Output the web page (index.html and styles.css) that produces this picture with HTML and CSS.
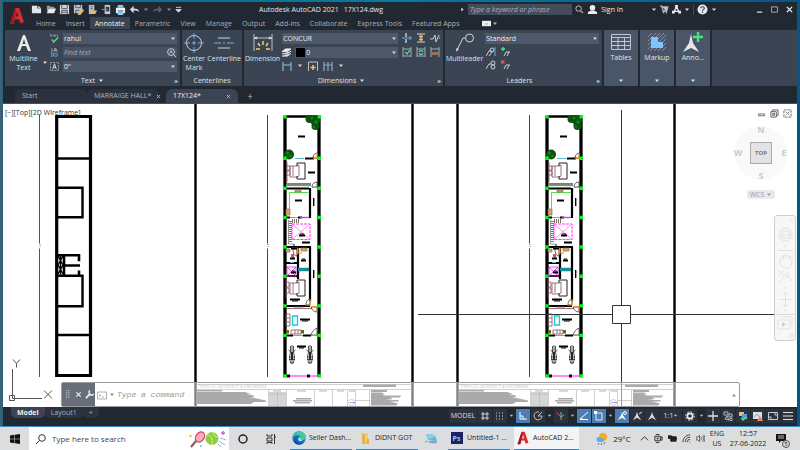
FILE: index.html
```html
<!DOCTYPE html>
<html lang="en">
<head>
<meta charset="utf-8">
<title>Autodesk AutoCAD 2021</title>
<link rel="stylesheet" href="styles.css">
</head>
<body>
<svg class="defs" aria-hidden="true">
  <defs>
    <symbol id="caret" viewBox="0 0 6 4"><path d="M1 .5h4L3 3z" fill="currentColor"/></symbol>
    <symbol id="logo" viewBox="0 0 16 18"><path d="M1 17 6.200 1h4L15 15l-3.600 1.400-1.300-4.200H6L4.500 17zM6.800 9.500h2.500L8 4.800z" fill="#d92b33"/><path d="M1 17 6.200 1l1 3L4.500 17z" fill="#a31822"/></symbol>
    <symbol id="arm" viewBox="0 0 12 12"><path d="M6 1 4.800 5 1 11l5-3 5 3-3.800-6z" fill="currentColor"/></symbol>

    <g id="plan">
      <path d="M285 116V377M319 116V377" stroke="#000" stroke-width="3.300" fill="none"/>
      <path d="M284 116.500h36" stroke="#000" stroke-width="2.600"/>
      <path d="M305 158.500h9M284 188.500h25M285 217.500h5M298 217.500h4M284 247h27M285 263h12M284 276h14M285 306h25M285 335.500h8M303 335.500h8" stroke="#000" stroke-width="2.200"/>
      <path d="M310 188V218M310 247V301M298 247V279" stroke="#000" stroke-width="2.200"/>
      <path d="M295 158.500h9M290 217.500h8M293 335.500h10M290 262.500h4" stroke="#54b9c8" stroke-width="1"/>
      <g fill="#08550f"><circle cx="289" cy="154.500" r="5"/><circle cx="309.500" cy="119" r="4"/><circle cx="315" cy="120.500" r="5"/><circle cx="315.500" cy="126" r="4"/></g>
      <g fill="#23801f"><circle cx="287.500" cy="153" r="1.500"/><circle cx="290.500" cy="156" r="1.300"/><circle cx="312" cy="118" r="1.300"/><circle cx="316" cy="122" r="1.600"/><circle cx="314" cy="127" r="1"/></g>
      <g fill="none" stroke="#834f5e" stroke-width=".8">
        <path d="M287 162v20M287 166h3v4h-3M287 171h3v4h-3M290 166h7l2-1v11l-2 1h-7zM293 166v10"/>
        <path d="M286 278v20M286 282h3v5h-3M286 288h3v5h-3M290 283h7l2-1v11l-2 1h-7zM293 283v10"/>
        <path d="M286 314h4v12h-4zM286 318h4M286 322h4M291 330h10v4H291zM295 330v4M298 330v4M286 308.500h26M294 307h9"/>
      </g>
      <path d="M297 166v-3h8v16h-8v-3M297 283v-3h8v16h-8v-3" fill="none" stroke="#222" stroke-width="1"/>
      <path d="M286 184.500h25" stroke="#937861" stroke-width="3"/><path d="M286 185.500h25" stroke="#36bec7" stroke-width="1.600" stroke-dasharray="2 1"/>
      <path d="M298 269.500h11" stroke="#168d94" stroke-width="3.500"/>
      <path d="M289.500 214v-21.500h19" stroke="#45e843" fill="none"/>
      <path d="M300 217.500h9" stroke="#e233e8" stroke-width="1.400"/>
      <path d="M292 224h18v15.500h-18z" fill="none" stroke="#ff38ef" stroke-dasharray="3 1"/><path d="M292 224l18 15.500M310 224l-18 15.500" stroke="#ff6bf2" stroke-width=".8"/>
      <path d="M290.500 221v21" stroke="#86705f" stroke-width="3" stroke-dasharray="1 1"/><path d="M292 221h8" stroke="#86705f" stroke-width="4" stroke-dasharray="1 1"/><path d="M288.500 220v24h5" stroke="#555" stroke-width=".6" fill="none"/>
      <path d="M286 209h4v6h-4zM295 190h6v2h-6zM286 249h4v3h-4zM301 248h6v3h-6z" fill="#d6a36d" stroke="#966f47" stroke-width=".7"/>
      <path d="M287 267h9v9h-9zl9 9m0-9-9 9" fill="none" stroke="#d82cdf" stroke-width=".8"/>
      <path d="M292.500 316h5v9h-5z" fill="none" stroke="#18c9ce" stroke-width="1.300"/>
      <path d="M286 330h3v3.500h-3zM301 330h3v3.500h-3z" fill="#5c6d16"/>
      <path d="M313 158c0-3 2-5 5-5v5zM312 187c0-3 2-5 5-5v5zM306 305c0-4 2-6 4-6v6zM311 307c1 3 3 5 6 5v-5zM311 335c1-3 3-6 6-7v7zM293 249c0 4 1 7 4 7v-7" fill="none" stroke="#222" stroke-width=".7"/>
      <path d="M313 158.500h5M317 153v5M312 187.500h5M305 305h5v-6M311 306.500h6v5M311 335.500h6M292 248h5v7M298 248v5h4" fill="none" stroke="#e88b37" stroke-width="1.100"/>
      <path d="M298 136.500h7M308 172.500h7M295 200.500h7M299 235.500h6M302 242.500h8M290 258.500h5M291 272.500h5M301 260.500h5M290 299.500h10M300 319.500h10M297 346.500h9M291 248.500h6" stroke="#000" stroke-width="2"/>
      <path d="M300 234h4M292 257h2M292 271h3M302 259h3M292 301h6M302 321h6M299 348h5M294 247v-3" stroke="#000" stroke-width="1"/>
      <path d="M291 254h3v3h-3z" fill="#cd5377"/><path d="M313.700 198v8M313.700 270v8" stroke="#000" stroke-width="1.400"/>
      <g id="bike" stroke="#272727" fill="none" stroke-width=".8"><path d="M292 345v19M290.500 346v6l-1 5 1 6h3l1-6-1-5v-6M288.500 350l3.500 3 3.500-3M289 357h6M289 359.500h6"/><path d="M292 352v8" stroke-width="2"/></g>
      <use href="#bike" x="18"/>
      <path d="M287 376h30" stroke="#ff3bec" stroke-width="1.200"/><path d="M287 374.500h3v3h-3zM307 374.500h3v3h-3z" fill="#170012"/>
      <path d="M283.200 115h3.500v3.400h-3.500zm34.400 0h3.500v3.400h-3.500zm-34.400 41.500h3.500v3.400h-3.500zm34.400 0h3.500v3.400h-3.500zM283.200 186.500h3.500v3.400h-3.500zm34.400 0h3.500v3.400h-3.500zM283.200 215.800h3.500v3.400h-3.500zm34.400 0h3.500v3.400h-3.500zM283.200 245.300h3.500v3.400h-3.500zm34.400 0h3.500v3.400h-3.500zM283.200 274.600h3.500v3.400h-3.500zm34.400 0h3.500v3.400h-3.500zM283.200 304.200h3.500v3.400h-3.500zm34.400 0h3.500v3.400h-3.500zM283.200 333.700h3.500v3.400h-3.500zm34.400 0h3.500v3.400h-3.500zM283.200 374.300h3.500v3.400h-3.500zm34.400 0h3.500v3.400h-3.500z" fill="#00fb16"/>
      <path d="M267.500 115V377" stroke="#444"/><path d="M267.500 243.500v5" stroke="#fff" stroke-width="2"/><path d="M268 244v4" stroke="#777" stroke-dasharray="1 1"/>
    </g>

    <g id="sheet">
      <path d="M195.500 104V407M412.500 104V407" stroke="#000" stroke-width="2.400"/>
      <path d="M197 384.500h215M197 389.500h215M268.500 389.500V407M286.500 389.500V407M314.500 389.500V407M332.500 389.500V407M347.500 389.500V407M355.500 389.500V407M369.500 389.500V407M355 400.500h15" stroke="#777" stroke-width=".7" fill="none"/>
      <path d="M269 392h17v15h-17z" fill="#aaa"/><path d="M277.500 392V407M269 394h17" stroke="#666" stroke-width=".6"/>
      <path d="M197 390h25v1.500h-25zM197 392h48l6 2-4 1h6l1 2h-4l16 3.500v1.500h-12l-3 2h-54zM363 384.500h33v2.500h-33zM371 390h16v2h-16zM371 392.500h11l3 2h-3l2 1h17l-1 2h-10l3 1.500-7 1h12l1 1.500h-9l8 2-2 2h-25zM296 398h15v1.500h-15zM293 400h19v1.500h-19zM295 402h15v1.500h-15z" fill="#555"/>
      <path d="M273 391h8M297 391h9M319 391h8M337 391h7M349 391h6" stroke="#666"/>
      <circle cx="351.500" cy="402.500" r="3" stroke="#777" stroke-width=".7" fill="none"/><path d="M350 402.500h5" stroke="#2735d2"/>
      <text x="199" y="388" class="sheet-title">TYPICAL ARCHITECT &amp; ENGINEERS</text>
    </g>
  </defs>
</svg>

<div class="desktop">
<main class="window">
  <header class="head">
    <button class="app" aria-label="Application menu"><svg viewBox="0 0 16 18" width="16" height="18"><use href="#logo"/></svg></button>
    <div class="titlebar">
      <div class="quick">
        <button aria-label="New"><svg class="i11" viewBox="0 0 12 12"><path d="M1 2h6v3h4v5H1zM8 2l3 2.500H8z" fill="#e2e4e7"/></svg></button>
        <button aria-label="Open"><svg class="i11" viewBox="0 0 12 12"><path d="M2 9V2h3l1 1h4v2H4z" fill="#9299a5"/><path d="M4 5h8l-2 5H2z" fill="#e9eaeb"/></svg></button>
        <button aria-label="Save"><svg class="i11" viewBox="0 0 12 12"><path d="M1 1h10v10H1z" fill="#d4d6da"/><path d="M3 1v4h6V1M3 11V7h6v4M3 9h6" stroke="#4b5461" fill="none"/></svg></button>
        <button aria-label="Save as"><svg class="i11" viewBox="0 0 12 12"><path d="M1 1h9v9H1z" fill="#c1c5cc"/><path d="M3 1v3h5V1M3 10V7h4" stroke="#4b5461" fill="none"/><path d="m6 10 4-5 2 2-4 5H5z" fill="#e6b26e"/></svg></button>
        <button aria-label="Open from web"><svg class="i11" viewBox="0 0 12 12"><path d="M2 1h6v10H2z" fill="#b8bdc5"/><path d="M4 3h2M4 5h2" stroke="#4a5564"/><path d="M5 7h6l-2 4H5z" fill="#e8b869"/></svg></button>
        <button aria-label="Save to mobile"><svg class="i11" viewBox="0 0 12 12"><path d="M4 1h6v10H4z" fill="#c3cad3"/><path d="M5 3h4v5H5z" fill="#34424e"/><path d="M1 6h5M4 4l2 2-2 2" stroke="#54b8ee" fill="none"/></svg></button>
        <button aria-label="Plot"><svg class="i11" viewBox="0 0 12 12"><path d="M1 4h10v6H1z" fill="#f0f2f4"/><path d="M3 1h6v3H3zM3 8h6v4H3z" fill="#8ec9f4"/><path d="M3 7.500h6" stroke="#526272"/></svg></button>
        <button aria-label="Undo"><svg class="i11" viewBox="0 0 12 12"><path d="M5 2v3c4 0 6 1 6 4-1-2-3-2-6-2v3L1 6z" fill="#d9dce0"/></svg></button>
        <svg class="c"><use href="#caret"/></svg>
        <button aria-label="Redo"><svg class="i11" viewBox="0 0 12 12"><path d="M7 2v3C3 5 1 6 1 9c1-2 3-2 6-2v3l4-4z" fill="#59616e"/></svg></button>
        <svg class="c"><use href="#caret"/></svg>
        <button aria-label="Customize"><svg class="i7" viewBox="0 0 8 8"><path d="M1 1.500h6M1 4h6L4 7z" stroke="#d7dadd" fill="#d7dadd"/></svg></button>
      </div>
      <h1 class="title"><span>Autodesk AutoCAD 2021</span><span>17X124.dwg</span></h1>
      <div class="account">
        <svg class="i5" viewBox="0 0 5 6"><path d="m1 1 3 2-3 2z" fill="#ddd"/></svg>
        <input class="keyword" aria-label="Search help" placeholder="Type a keyword or phrase">
        <button aria-label="Search"><svg class="i9" viewBox="0 0 10 10"><circle cx="4" cy="4" r="3" fill="none" stroke="#ccd0d5"/><path d="m6 6 3 3" stroke="#c79c57" stroke-width="1.500"/></svg></button>
        <button class="sign"><svg class="i11" viewBox="0 0 12 12"><circle cx="6" cy="4" r="3" fill="#eee"/><path d="M1 11V9l3-2h4l3 2v2z" fill="#eee"/></svg>Sign In</button>
        <svg class="c"><use href="#caret"/></svg>
        <button aria-label="App store"><svg class="i9" viewBox="0 0 10 10"><path d="M0 1h2l1 6h5M2 2h7L8 6H3" fill="#bdc2c9" stroke="#bdc2c9"/><circle cx="4" cy="8.500" r=".8" fill="#ddd"/><circle cx="7" cy="8.500" r=".8" fill="#ddd"/></svg></button>
        <button aria-label="Autodesk"><svg class="i9" viewBox="0 0 10 10"><path d="m5 2-3 6m3-6 3 6M2 7h6" stroke="#eee" fill="none" stroke-width="1.500"/><path d="M3.500 0h3v3h-3zM0 6.500h3v3H0zM7 6.500h3v3H7z" fill="#eee"/></svg></button>
        <svg class="c"><use href="#caret"/></svg>
        <i class="bar"></i>
        <button aria-label="Help"><svg class="i11" viewBox="0 0 12 12"><circle cx="6" cy="6" r="5.500" fill="#e7e8e9"/><path d="M4 4.500c0-2 4-2 4 0 0 1.500-2 1.200-2 3M6 8.500v1.300" fill="none" stroke="#38414f" stroke-width="1.200"/></svg></button>
        <svg class="c"><use href="#caret"/></svg>
      </div>
      <div class="winctl">
        <button aria-label="Minimize"><svg class="i7" viewBox="0 0 8 8"><path d="M1 7h6" stroke="#eee" stroke-width="1.300"/></svg></button>
        <button aria-label="Restore"><svg class="i7" viewBox="0 0 8 8"><path d="M.5 1h7v6h-7z" stroke="#bbb" fill="none"/></svg></button>
        <button aria-label="Close"><svg class="i7" viewBox="0 0 8 8"><path d="m1 1 6 6m0-6L1 7" stroke="#eee" stroke-width="1.600"/></svg></button>
      </div>
    </div>
    <nav class="menu">
      <button>Home</button><button>Insert</button><button class="on">Annotate</button><button>Parametric</button><button>View</button><button>Manage</button><button>Output</button><button>Add-ins</button><button>Collaborate</button><button>Express Tools</button><button>Featured Apps</button>
      <button class="mini" aria-label="Minimize ribbon"><svg class="i9" viewBox="0 0 10 6"><path d="M0 0h10v6H0z" fill="#eee"/><path d="M4 3.500h2" stroke="#777"/></svg><svg class="c"><use href="#caret"/></svg></button>
    </nav>
  </header>

  <section class="ribbon">
    <div class="panel p-text">
      <div class="tools">
        <button class="big"><svg class="i20" viewBox="0 0 20 20"><path d="M3 18 9 2h2l6 16h-3l-2-5H8l-2 5zM8.500 11h3L10 6z" fill="#e9eaec"/></svg><span>Multiline<br>Text</span></button>
        <svg class="c low"><use href="#caret"/></svg>
        <div class="rows">
          <div class="row"><button aria-label="Check spelling"><svg class="i9" viewBox="0 0 10 10"><path d="M0 3V1h2v2M4 3V1h2v2M9 1H8v2h1M0 2h2M4 2h2" stroke="#aaa" stroke-width=".7" fill="none"/><path d="m2 6 2 3 5-5" stroke="#50dc82" stroke-width="1.600" fill="none"/></svg></button><span class="field"><select aria-label="Text style"><option>rahul</option></select><svg class="c"><use href="#caret"/></svg></span></div>
          <div class="row"><button aria-label="Align text"><svg class="i9" viewBox="0 0 10 10"><path d="M2 0v10" stroke="#6db4e5"/><path d="m4 4 2-4 2 4M5 3h2" stroke="#bbb" fill="none"/><path d="M4 6h4v3H4z" fill="none" stroke="#5eaae0"/></svg></button><span class="field find"><input aria-label="Find text" placeholder="Find text"><svg class="i9" viewBox="0 0 10 10"><circle cx="4.500" cy="4.500" r="3.800" fill="none" stroke="#d5d8dd"/><path d="m7 7 3 3M3 6l1.500-3L6 6" stroke="#d5d8dd" fill="none"/></svg></span></div>
          <div class="row"><button aria-label="Text height"><svg class="i9" viewBox="0 0 10 10"><path d="M.5.5h9v9h-9z" stroke="#a6acb6" stroke-dasharray="2 1" fill="none"/><path d="m3 8 2-6 2 6M4 6h2" stroke="#e4e5e7" fill="none"/></svg></button><span class="field"><select aria-label="Height"><option>0"</option></select><svg class="c"><use href="#caret"/></svg></span></div>
        </div>
      </div>
      <div class="cap"><span>Text</span><svg class="c"><use href="#caret"/></svg><b>»</b></div>
    </div>
    <div class="panel p-center">
      <div class="tools">
        <button class="big"><svg class="i20" viewBox="0 0 20 20"><circle cx="10" cy="10" r="7.500" stroke="#ccd0d6" fill="none"/><path d="M10 0v6m0 2v4m0 2v6M0 10h6m2 0h4m2 0h6" stroke="#63b6ed"/></svg><span>Center<br>Mark</span></button>
        <button class="big"><svg class="i20" viewBox="0 0 20 20"><path d="M4 5h12M4 15h12" stroke="#cfd2d7" stroke-width="1.200"/><path d="M0 10h7m2 0h2m2 0h7" stroke="#63b6ed" stroke-width="1.200"/></svg><span>Centerline</span></button>
      </div>
      <div class="cap"><span>Centerlines</span></div>
    </div>
    <div class="panel p-dim">
      <div class="tools">
        <button class="big"><svg class="i20" viewBox="0 0 20 20"><path d="M1 1v17M19 1v17M1 5h18M1 5l3-1v2zM19 5l-3-1v2z" stroke="#ccd0d6" fill="#ccd0d6" stroke-width=".9"/><path d="M10 8v4M5 10l2 3M15 10l-2 3M3 16h4M17 16h-4" stroke="#ffca68" stroke-width="1.500"/></svg><span>Dimension</span></button>
        <div class="rows">
          <span class="field"><select aria-label="Dimension style"><option>CONCUR</option></select><svg class="c"><use href="#caret"/></svg></span>
          <div class="row"><svg class="i9" viewBox="0 0 10 10"><path d="m0 4 4-3h6L6 4zM0 6.500h6l4-3M0 9h6l4-3" fill="#eee" stroke="#eee"/></svg><span class="field layer"><i class="swatch"></i><select aria-label="Dimension layer"><option>0</option></select><svg class="c"><use href="#caret"/></svg></span></div>
          <div class="row dimtools">
            <button aria-label="Linear"><svg class="i10" viewBox="0 0 10 10"><path d="M1 1v9M9 1v9" stroke="#bbc0c8"/><path d="M1 4h8" stroke="#5baee6" stroke-width="1.300"/></svg></button><svg class="c"><use href="#caret"/></svg>
            <button aria-label="Quick"><svg class="i10" viewBox="0 0 10 10"><path d="M.5 10V1h9v9" stroke="#bbc0c8" fill="none"/><path d="M5 4v5M2.500 6.500h5" stroke="#ffbd4a" stroke-width="1.500"/></svg></button>
            <button aria-label="Continue"><svg class="i10" viewBox="0 0 10 10"><path d="M1 1v9M5 1v9M9 1v9" stroke="#bbc0c8"/><path d="M1 4h8" stroke="#5baee6"/></svg></button><svg class="c"><use href="#caret"/></svg>
          </div>
        </div>
        <div class="mini-grid">
          <button aria-label="Break"><svg class="i10" viewBox="0 0 10 10"><path d="M0 5h10M8 3v4" stroke="#5baee6"/><path d="M4 0v4M4 6v4" stroke="#ddd" stroke-width="1.300"/></svg></button>
          <button aria-label="Adjust space"><svg class="i10" viewBox="0 0 10 10"><path d="M1 1h8M1 9h8" stroke="#ddd"/><path d="M5 2v6M3 3.500h4M3 6.500h4" stroke="#e9b650" stroke-width="1.500"/></svg></button>
          <button aria-label="Jogged"><svg class="i10" viewBox="0 0 10 10"><path d="M0 6h3l2-4 1 7 3-7M9 5h1" stroke="#ccd" fill="none"/></svg></button>
          <button aria-label="Inspect"><svg class="i10" viewBox="0 0 10 10"><path d="M1 0v10M9 0v10M1 2h8M1 9h8" stroke="#aab"/><path d="m3 5 2 2 3-4" stroke="#54d883" fill="none" stroke-width="1.300"/></svg></button>
          <button aria-label="Update"><svg class="i10" viewBox="0 0 10 10"><path d="M1 0v10M9 0v10M1 2h8M1 9h8" stroke="#aab"/><path d="M3 5c1-2 3-2 4 0M7 6c-1 2-3 2-4 0" stroke="#54d883" fill="none" stroke-width="1.300"/></svg></button>
          <button aria-label="Override"><svg class="i10" viewBox="0 0 10 10"><path d="M1 0v10M9 0v10M1 2h8" stroke="#aab"/><path d="M2 5h6v3H2z" fill="#a46c5a"/></svg></button>
        </div>
      </div>
      <div class="cap"><span>Dimensions</span><svg class="c"><use href="#caret"/></svg><b>»</b></div>
    </div>
    <div class="panel p-lead">
      <div class="tools">
        <button class="big"><svg class="i20" viewBox="0 0 20 20"><circle cx="14.500" cy="5" r="4" fill="none" stroke="#d1d4d9"/><path d="M10.500 5H8L2 17" stroke="#d1d4d9" fill="none"/><path d="m1 19 .5-4L4 16z" fill="#ddd"/></svg><span>Multileader</span></button>
        <div class="rows">
          <span class="field"><select aria-label="Multileader style"><option>Standard</option></select><svg class="c"><use href="#caret"/></svg></span>
          <div class="row lead"><button aria-label="Align leaders"><svg class="i10" viewBox="0 0 10 10"><path d="m0 9 3-5h3M3 9l3-4" stroke="#ccd0d6" fill="none"/><circle cx="6" cy="3" r="2" stroke="#ccd0d6" fill="none"/><path d="M9 0v9" stroke="#5baee6"/></svg></button><button aria-label="Add leader"><svg class="i10" viewBox="0 0 10 10"><path d="m3 9 2-4h4M6 9l2-4" stroke="#ccd0d6" fill="none"/><path d="M2 0v4M0 2h4" stroke="#4fe27d" stroke-width="1.300"/></svg></button></div>
          <div class="row lead"><button aria-label="Collect leaders"><svg class="i10" viewBox="0 0 10 10"><path d="m0 9 3-5h2" stroke="#ccd0d6" fill="none"/><circle cx="7" cy="3" r="2" stroke="#ccd0d6" fill="none"/><circle cx="7" cy="7" r="2" stroke="#ccd0d6" fill="none"/></svg></button><button aria-label="Remove leader"><svg class="i10" viewBox="0 0 10 10"><path d="m3 9 2-4h4M6 9l2-4" stroke="#ccd0d6" fill="none"/><path d="M0 .5h3.500v3H0z" fill="#e65360"/></svg></button></div>
        </div>
      </div>
      <div class="cap"><span>Leaders</span><b>»</b></div>
    </div>
    <button class="fold"><svg class="i20" viewBox="0 0 20 20"><path d="M.5 2.500h19v15H.5zM.5 5.500h19M.5 9.500h19M.5 13.500h19M7 5.500v12M13.500 5.500v12" fill="none" stroke="#c2c7cf"/></svg><span>Tables</span><svg class="c"><use href="#caret"/></svg></button>
    <button class="fold"><svg class="i20" viewBox="0 0 20 20"><path d="m1 5 4-4M1 9l8-8M1 13 13 1M1 17 17 1M3 19 19 3M7 19 19 7M11 19l8-8M15 19l4-4" stroke="#8c95a3" stroke-width=".9"/><path d="M4 5h7v5h5v6H4z" fill="#7cc4fb"/></svg><span>Markup</span><svg class="c"><use href="#caret"/></svg></button>
    <button class="fold"><svg class="i20" viewBox="0 0 20 20"><path d="M8 2 6 11 0 20l8-4 8 4-6-9z" fill="#e6e6e7"/><path d="M15 0v10M10 5h10" stroke="#4be082" stroke-width="2.400"/></svg><span>Anno...</span><svg class="c"><use href="#caret"/></svg></button>
    <div class="panel rest"></div>
  </section>

  <nav class="docs">
    <button class="doc">Start</button>
    <button class="doc">MARRAIGE HALL* <svg class="i5" viewBox="0 0 6 6"><path d="m1 1 4 4m0-4L1 5" stroke="#c3c6cb"/></svg></button>
    <button class="doc on">17X124* <svg class="i5" viewBox="0 0 6 6"><path d="m1 1 4 4m0-4L1 5" stroke="#c3c6cb"/></svg></button>
    <button class="plus">+</button>
  </nav>

  <section class="canvas">
    <svg class="drawing" viewBox="3 104 794 303" preserveAspectRatio="xMinYMin slice" role="img" aria-label="Floor plans">
      <g fill="none" stroke="#000">
        <path d="M56.700 116.500h33.800V375.500H56.700z" stroke-width="3.200"/>
        <path d="M58 158.500h32M58 335h32" stroke-width="2.400"/>
        <path d="M57 187.700h25.500v29.600H57M57 275.700h25.500v30.600H57" stroke-width="2.400"/>
        <path d="M57 255.200h22v6M64 255v21M64 265.500h16M79 270.500v5" stroke-width="2.600"/>
        <path d="m58 256 5 9-5 9M63 256l-5 9 5 9M60.500 256v19" stroke-width="1.400"/>
      </g>
      <path d="M39.500 115V377" stroke="#555"/><path d="M39.500 243.500v5" stroke="#fff" stroke-width="2"/><path d="M40 244v4" stroke="#777" stroke-dasharray="1 1"/>
      <use href="#sheet"/><use href="#sheet" x="262"/>
      <use href="#plan"/><use href="#plan" x="262"/>
      <path d="M12.500 369V398.500H42M9.500 395.500h5v5h-5zM13 359.500l3.500 4 3.500-4M16.500 363.500v4M44 390.500l8 8m0-8-8 8" stroke="#555" fill="none"/>
      <path d="M418 314.500h194m19 0h165M621.500 110V305m0 19v83M612.500 305.500h18v18h-18z" stroke="#333" fill="none"/>
    </svg>
    <button class="viewlabel">[−][Top][2D Wireframe]</button>
    <div class="vpctl">
      <svg class="i9" viewBox="0 0 10 10"><path d="M1.500 5.500h7v2h-7z" fill="none" stroke="#666"/></svg>
      <svg class="i9" viewBox="0 0 10 10"><path d="M1 3h6v6H1zM3 3V1h6v6H7M3 5h2v2H3z" fill="none" stroke="#555"/></svg>
      <svg class="i9" viewBox="0 0 10 10"><path d="M1 1h8v8H1zM3 3l4 4m0-4L3 7" fill="none" stroke="#666" stroke-dasharray="3 1"/></svg>
    </div>
    <div class="cube"><span></span><b>N</b><span></span><b>W</b><button>TOP</button><b>E</b><span></span><b>S</b><span></span></div>
    <button class="wcs">WCS <svg class="c"><use href="#caret"/></svg></button>
    <div class="navbar">
      <svg viewBox="0 0 20 124"><g fill="none" stroke="#e2e2e4"><path d="M15 3l3 3m0-3-3 3M2 34.500h16M9 30h3M9 72h3M9 94h3"/><circle cx="10.500" cy="18.500" r="6.500"/><path d="M7 15h7v7H7zM5 19h11"/><path d="M5 46c0-8 12-9 12-1 0 4-2 7-6 7-3 0-6-3-6-6zM8 44v-5M11 43v-5M14 44v-4M4 55l5 5m0-5-5 5M13 60l4 5M4 66l5-5M10.500 76v15M4 83.500h13M8 79l2.500-3 2.500 3M8 88l2.500 3 2.500-3M3 104h12v9H3zM5 101h12v8"/><circle cx="12" cy="59" r="2"/><circle cx="16" cy="120" r="2"/></g><path d="m7 106 4 2.500-4 2.500z" fill="#ccc"/></svg>
    </div>
    <div class="command">
      <div class="grip"><svg class="i9" viewBox="0 0 8 10"><path d="M3 0v10M5.500 0v10" stroke="#e3e5e8" stroke-dasharray="1 1"/></svg><svg class="i7" viewBox="0 0 8 8"><path d="m1.500 1.500 5 5m0-5-5 5" stroke="#eee" stroke-width="1.300"/></svg><svg class="i9" viewBox="0 0 10 10"><path d="m1 9 5-5" stroke="#f2f2f3" stroke-width="1.800"/><path d="M6 0 5 3l2 2 3-1c0 3-3 3-4 2L4 4c-1-2 0-4 2-4z" fill="#f2f2f3"/></svg></div>
      <svg class="i10" viewBox="0 0 10 10"><path d="M.5 2h9v7h-9zM2 4.500l2 1-2 1M5 7h2" fill="none" stroke="#999" stroke-width=".8"/></svg><svg class="c"><use href="#caret"/></svg>
      <input aria-label="Command" placeholder="Type a command">
      <svg class="c up"><use href="#caret"/></svg>
    </div>
  </section>

  <footer class="status">
    <nav class="layouts"><button class="on">Model</button><button>Layout1</button><button>+</button></nav>
    <div class="toggles">
      <button class="model">MODEL</button>
      <button aria-label="Grid"><svg class="i10" viewBox="0 0 10 10"><path d="M3 1v8M7 1v8M1 3h8M1 7h8" stroke="#cdd1d7"/></svg></button>
      <button aria-label="Snap"><svg class="i10" viewBox="0 0 10 10"><path d="M1 2h9M1 5h9M1 8h9" stroke="#d4d7dc" stroke-dasharray="1 2"/></svg></button>
      <svg class="c"><use href="#caret"/></svg>
      <button class="lit" aria-label="Ortho"><svg class="i10" viewBox="0 0 10 10"><path d="M2 1v7h7M2 5h3v3" stroke="#fff" fill="none"/></svg></button>
      <button aria-label="Polar"><svg class="i10" viewBox="0 0 10 10"><path d="M9 5a4 4 0 1 1-3-4M5 5h4M5 5l4-4" stroke="#bfc4cc" fill="none"/></svg></button>
      <svg class="c"><use href="#caret"/></svg>
      <button aria-label="Isodraft"><svg class="i10" viewBox="0 0 10 10"><path d="m1 2 4 4" stroke="#d65965"/><path d="M5 1v8" stroke="#54c880"/><path d="m5 6 3-2" stroke="#aaa"/></svg></button>
      <svg class="c"><use href="#caret"/></svg>
      <button class="lit" aria-label="Tracking"><svg class="i10" viewBox="0 0 10 10"><path d="M1 8 9 1M1 8.500h8M1 8h3" stroke="#fff" fill="none"/></svg></button>
      <button class="lit" aria-label="Object snap"><svg class="i10" viewBox="0 0 10 10"><path d="M2 2h6v7H2z" stroke="#dceeff" fill="none"/><path d="M0 0h3v3H0z" fill="#fff"/></svg></button>
      <svg class="c"><use href="#caret"/></svg>
      <button class="lit" aria-label="Annotation visibility"><svg class="i10"><use href="#arm"/><circle cx="8" cy="2" r="1.500" fill="none" stroke="#fff"/></svg></button>
      <button aria-label="Auto scale"><svg class="i10"><use href="#arm"/><path d="m7 3 3-2" stroke="#ddd"/></svg></button>
      <button aria-label="Annotation"><svg class="i10"><use href="#arm"/></svg></button>
      <button class="scale">1:1<svg class="c"><use href="#caret"/></svg></button>
      <button aria-label="Workspace"><svg class="i10" viewBox="0 0 10 10"><circle cx="5" cy="5" r="2.600" fill="none" stroke="#eee" stroke-width="1.600"/><circle cx="5" cy="5" r="4.200" fill="none" stroke="#eee" stroke-dasharray="1.700 1.600"/></svg></button>
      <svg class="c"><use href="#caret"/></svg>
      <button aria-label="Monitor"><svg class="i10" viewBox="0 0 10 10"><path d="M5 0v10M0 5h10" stroke="#ddd" stroke-width="1.300"/></svg></button>
      <button aria-label="Isolate"><svg class="i10" viewBox="0 0 10 10"><path d="M1 1h4v3H1zM6 3h3v3H6zM2 8l2-3 2 4z" stroke="#b8bdc6" fill="none"/><circle cx="8" cy="8.500" r="1.300" stroke="#b8bdc6" fill="none"/></svg></button>
      <button aria-label="Graphics"><svg class="i10" viewBox="0 0 10 10"><path d="M1 1h5v4H1z" fill="#eec14e"/><path d="M4 3h5v5H4z" fill="#4f9fe1"/><path d="m3 7 2 2 4-3" stroke="#54d780" fill="none" stroke-width="1.500"/></svg></button>
      <button aria-label="Notices"><svg class="i10" viewBox="0 0 10 10"><path d="M0 1h9v7H0z" fill="#dedfdf"/><path d="m1 6 3-3 3 3" stroke="#8f98a5" fill="none"/><path d="m7 5 3 5H4z" fill="#e78b5b"/></svg></button>
      <button aria-label="Clean screen"><svg class="i10" viewBox="0 0 10 10"><path d="M.5 1.500h9v7h-9zM6 3h2v2M4 7H2V5" stroke="#c3c8cf" fill="none"/></svg></button>
      <button aria-label="Customization"><svg class="i10" viewBox="0 0 10 10"><path d="M0 1.500h10M0 5h10M0 8.500h10" stroke="#ddd" stroke-width="1.200"/></svg></button>
    </div>
  </footer>
</main>
</div>

<footer class="taskbar">
  <button class="start" aria-label="Start"><svg class="i10" viewBox="0 0 10 10"><path d="m0 1.500 4.500-.7v4H0zM5 .7 10 0v4.800H5zM0 5.300h4.500v4L0 8.600zM5 5.300h5V10l-5-.7z" fill="#111"/></svg></button>
  <div class="search"><svg class="i10" viewBox="0 0 10 10"><circle cx="6" cy="4" r="3.300" fill="none" stroke="#333"/><path d="M3.500 6.500 0 10" stroke="#333"/></svg><input aria-label="Search Windows" placeholder="Type here to search">
    <svg class="sport" viewBox="0 0 38 18"><ellipse cx="11" cy="7" rx="4" ry="5.500" transform="rotate(35 11 7)" fill="#f5b2bd" stroke="#e34262" stroke-width="1.300"/><path d="m7 11-5 6" stroke="#8b5361" stroke-width="2"/><circle cx="23" cy="8.500" r="6.500" fill="#8bce42"/><path d="M18 5c4 0 6 3 5 10M24 2c0 3 2 5 5 5" stroke="#d7ef95" fill="none"/><path d="m31 8 6 2M30 11l6 4M29 14l3 3" stroke="#a5aecf"/><path d="M34 1v4M32 3h4" stroke="#d862e7" stroke-width="1.500"/><circle cx="1.500" cy="6" r="1.200" fill="#f4b942"/><circle cx="12" cy="16" r="1" fill="#43cbd8"/></svg></div>
  <button class="sys" aria-label="Cortana"><svg class="i10" viewBox="0 0 10 10"><circle cx="5" cy="5" r="4" fill="none" stroke="#222" stroke-width="1.500"/></svg></button>
  <button class="sys" aria-label="Task view"><svg class="i10" viewBox="0 0 10 10"><path d="M1 0v2h5V0M1 4h5v3H1zM1 10V8.500h5V10M8.500 0v10M8 3h2" fill="none" stroke="#333"/></svg></button>
  <button class="task"><svg class="i14" viewBox="0 0 14 14"><circle cx="7" cy="7" r="6.700" fill="#1479c8"/><path d="M.5 6C2-1 14-1 13.700 6c-.2 4-5 4-6 2 1-2 0-4-2.500-4C3 4 1 5 .5 7z" fill="#47c6a0"/><path d="M5 6c-2 4 1 7 7 5-2 3-6 3-8 2-3-2-2-6 1-7z" fill="#115299"/><path d="M7.500 6.500c1.500 1 0 3 3 3.300-2 .9-4.500-.3-4-2.300z" fill="#e5f5fb"/></svg>Seller Dash...</button>
  <button class="task"><svg class="i14" viewBox="0 0 14 14"><path d="M4 2h6v11H4z" fill="#f3cd68"/><path d="m4 2 3 2v9H4zM9 8h2v5H8z" fill="#e6b34b"/></svg>DIDNT GOT</button>
  <button class="sys pc" aria-label="Remote desktop"><svg class="i14" viewBox="0 0 14 14"><path d="m2 2 9 1 2 6-9-1z" fill="#5cb3e6"/><path d="m2 2 9 1v2L4 8z" fill="#88cdf2"/><path d="m5 10 5 1 3-1-4-1zM1 10l3-1" fill="#8c9eab" stroke="#8c9eab"/></svg></button>
  <button class="task"><svg class="i14" viewBox="0 0 14 14"><path d="M1 1h12v12H1z" fill="#1c2064"/><text x="2.500" y="10" class="ps">Ps</text></svg>Untitled-1 ...</button>
  <button class="task on"><svg class="i14" viewBox="0 0 16 18"><use href="#logo"/></svg>AutoCAD 2...</button>
  <div class="tray">
    <button class="weather"><svg class="i14" viewBox="0 0 14 14"><circle cx="8" cy="5" r="4" fill="#f7ab22"/><path d="M2 9c-2-4 3-5 4-3 3-1 4 3 2 4H3z" fill="#64aee2"/><path d="m4 11-1 2m4-2-1 2m4-3-1 2" stroke="#3688ce"/></svg>29°C</button>
    <svg class="i9" viewBox="0 0 10 10"><path d="m1 7 4-4 4 4" stroke="#222" fill="none"/></svg>
    <svg class="i9" viewBox="0 0 10 10"><path d="M1 2.500h6v5H1zM7 4l2-1v4L7 6M2 .5h4M2 9.500h4" stroke="#222" fill="none"/><circle cx="4" cy="5" r="1" fill="#222"/></svg>
    <svg class="i9" viewBox="0 0 10 10"><path d="M3 3h6v5H3zM0 2h4v3H0z" fill="#222" stroke="#222"/><path d="M9 4.500h1v2" stroke="#222"/></svg>
    <svg class="i9" viewBox="0 0 10 10"><path d="M1 9C1 5 4 1 9 1M3.500 9c0-3 2-5.500 5.500-5.500M6 9c0-2 1-3 3-3M8 9h1" stroke="#333" fill="none"/></svg>
    <svg class="i9" viewBox="0 0 10 10"><path d="M0 3.500h2l2-2v7l-2-2H0zM5.500 3.500c1 1 1 2 0 3M7 2c2 2 2 4 0 6M8.500 1c2 3 2 5 0 8" stroke="#333" fill="none" stroke-width=".8"/></svg>
    <div class="stack lang"><span>ENG</span><span>US</span></div>
    <div class="stack clock"><span>12:57</span><span>27-06-2022</span></div>
    <button class="note" aria-label="Notifications"><svg class="i10" viewBox="0 0 10 10"><path d="M0 0h10v7H5L3 9V7H0z" fill="#151515"/><path d="M2 2h6M2 4h6" stroke="#e4e4e4" stroke-width=".8"/></svg><span>5</span></button>
  </div>
</footer>
</body>
</html>
```
FILE: styles.css
```css
* { box-sizing: border-box; }

body {
  margin: 0;
  height: 100vh;
  display: flex;
  flex-direction: column;
  overflow: hidden;
  font: 7px/10px "Open Sans", "Noto Sans", sans-serif;
  color: #d6d9de;
}

button, input, select {
  font: inherit;
  color: inherit;
  background: none;
  border: 0;
  border-radius: 0;
  margin: 0;
  padding: 0;
  outline: 0;
  appearance: none;
}

button {
  display: flex;
  align-items: center;
  justify-content: center;
  white-space: nowrap;
}

svg { display: block; flex: none; }
.defs { position: absolute; width: 0; height: 0; }
.i5 { width: 5px; height: 5px; }
.i7 { width: 7px; height: 7px; }
.i9 { width: 9px; height: 9px; }
.i10 { width: 10px; height: 10px; }
.i11 { width: 11px; height: 11px; }
.i14 { width: 14px; height: 14px; }
.i20 { width: 20px; height: 20px; }
.c { width: 6px; height: 4px; }

.desktop {
  flex: 1;
  min-height: 0;
  display: flex;
  padding: 2px 3px 0 3px;
  background: linear-gradient(90deg, #4b6069 0, #17658b 3px, #087aa0 50%, #075784 100%);
  border-bottom: 1px solid #3d8fc4;
}
.window {
  flex: 1;
  min-width: 0;
  display: flex;
  flex-direction: column;
  background: #222832;
}

/* Title bar and ribbon tabs */
.head {
  display: grid;
  grid-template-columns: 28px 1fr;
  grid-template-rows: 15px 12px;
}
.app { grid-row: span 2; }
.titlebar {
  display: grid;
  grid-template-columns: 228px 1fr 257px 80px;
  align-items: center;
}
.quick { display: flex; align-items: center; gap: 3px; }
.quick .c { color: #858c98; }
.title { display: flex; gap: 5px; margin: 0; font: inherit; color: #e6e7e9; white-space: nowrap; }
.account { display: flex; align-items: center; gap: 3px; }
.keyword { flex: 1; min-width: 0; height: 11px; padding: 0 2px; background: #444c5c; font-style: italic; }
input::placeholder { color: #a9afba; opacity: 1; }
.sign { gap: 3px; margin-right: 25px; color: #eee; }
.bar { width: 1px; height: 10px; background: #414957; }
.winctl { display: flex; justify-content: flex-end; gap: 8px; padding-right: 4px; }
.menu { display: flex; }
.menu button { padding: 1px 5px 0; color: #a9afb9; }
.menu button.on { background: #3b4453; color: #f1f2f3; }
.menu .mini { margin-left: 12px; gap: 1px; }

/* Ribbon */
.ribbon { display: flex; height: 58px; padding: 1px 0 1px 2px; gap: 2px; }
.panel { display: flex; flex-direction: column; justify-content: space-between; background: #3b4453; }
.tools { display: flex; padding: 3px 3px 0 2px; gap: 3px; align-items: flex-start; }
.cap { display: flex; align-items: center; justify-content: center; gap: 3px; height: 11px; position: relative; color: #e0e2e5; }
.cap b { position: absolute; right: 2px; font-size: 6px; }
.big { flex-direction: column; gap: 1px; line-height: 9px; color: #dfe1e5; }
.big span { min-height: 18px; }
.low { margin-top: 28px; }
.rows { flex: 1; min-width: 0; display: flex; flex-direction: column; gap: 3px; }
.row { display: flex; align-items: center; gap: 4px; }
.field { flex: 1; min-width: 0; height: 11px; display: flex; align-items: center; background: #4d586b; padding: 0 1px; }
.rows > .field { flex: none; }
.field select, .field input { flex: 1; min-width: 0; width: 100%; height: 11px; color: #eceef0; }
.find { background: #485264; }
.find input { font-style: italic; }
.swatch { width: 9px; height: 9px; margin-right: 1px; background: #000; }
.p-text { width: 175px; }
.p-text .tools { gap: 2px; }
.p-text .big { width: 33px; }
.p-center { width: 60px; }
.p-center .tools { justify-content: space-between; gap: 2px; padding: 3px 1px 0; }
.p-dim { width: 199px; }
.p-dim .tools, .p-lead .tools { gap: 2px; padding-left: 1px; }
.p-dim .cap { padding-right: 4px; }
.p-lead { width: 157px; }
.p-lead .cap { padding-right: 8px; }
.mini-grid { display: grid; grid-template-columns: repeat(3, 10px); gap: 4px; padding-left: 2px; }
.dimtools { gap: 5px; }
.lead { gap: 5px; padding-left: 1px; }
.fold { width: 34px; flex-direction: column; background: #4a5568; padding: 2px 0 3px; gap: 1px; color: #e1e4e8; }
.fold .c { margin-top: auto; }
.rest { flex: 1; }

/* Document tabs */
.docs { display: flex; align-items: stretch; height: 17px; padding: 2px 0 0 12px; border-bottom: 1px solid #485160; }
.doc { width: 72px; padding: 0 7px; gap: 5px; justify-content: space-between; color: #aeb4bd; background: #2b323e; border-radius: 6px 6px 0 0; }
.doc.on { margin-left: 7px; background: #3b4453; color: #eceef0; }
.plus { width: 20px; margin-left: 2px; font-size: 10px; color: #aab0ba; }

/* Drawing area */
.canvas { flex: 1; min-height: 0; position: relative; background: #fff; color: #333; overflow: hidden; }
.drawing { width: 100%; height: 100%; }
.sheet-title { font: 4px "Liberation Serif", serif; fill: #777; }
.viewlabel { position: absolute; left: 2px; top: 4px; color: #333; }
.vpctl { position: absolute; right: 5px; top: 5px; display: flex; gap: 4px; }
.cube {
  position: absolute;
  right: 2px;
  top: 15px;
  display: grid;
  grid-template: 22px 24px 22px / 22px 24px 22px;
  place-items: center;
  background: radial-gradient(circle, #f9f9fa 0 26px, transparent 27px);
  color: #cbcbce;
  font-size: 9px;
}
.cube button { width: 22px; height: 22px; background: #e3e3e7; border: 1px solid #aaa; color: #777; font: bold 6px "Open Sans", sans-serif; }
.wcs { position: absolute; right: 22px; top: 86px; width: 28px; height: 9px; gap: 2px; background: #e8e8ef; color: #9c9cab; border-radius: 3px; }
.navbar { position: absolute; right: 1px; top: 111px; width: 22px; border: 1px solid #cfcfcf; border-radius: 3px; background: rgba(246, 246, 247, .85); }
.command {
  position: absolute;
  left: 58px;
  right: 57px;
  bottom: 0;
  height: 25px;
  display: flex;
  align-items: center;
  gap: 2px;
  background: rgba(255, 255, 255, .5);
  border: 1px solid #9b9b9b;
  border-radius: 2px;
  color: #888;
}
.grip { display: flex; align-items: center; justify-content: space-around; width: 33px; height: 100%; background: #676d79; }
.command input { flex: 1; font: italic 8px "Liberation Mono", monospace; }
.command input::placeholder { color: #999; }
.up { transform: rotate(180deg); margin-right: 2px; }

/* Status bar */
.status { display: flex; justify-content: space-between; height: 19px; }
.layouts { display: flex; align-items: flex-start; padding-left: 8px; }
.layouts button { height: 11px; padding: 0 6px; background: #2c333f; color: #a9afba; border-radius: 0 0 5px 5px; }
.layouts .on { font-weight: bold; color: #eee; background: #3b4453; }
.toggles { display: flex; align-items: center; gap: 1px; height: 17px; padding-right: 2px; }
.toggles button { width: 14px; height: 14px; background: #2c333f; color: #dcdfe4; }
.toggles .c { width: 5px; margin: 0 1px; color: #c5c9d0; }
.toggles .lit { background: #4b7eb4; color: #fff; }
.toggles .model { width: 28px; }
.toggles .scale { width: 22px; }
.scale .c { margin: 0; }

/* Windows taskbar */
.taskbar { display: flex; height: 23px; background: #dcdddf; color: #222; font-size: 8px; }
.start { width: 29px; }
.search { width: 200px; display: flex; align-items: center; padding: 0 2px 0 7px; gap: 6px; background: #fff; }
.search input { flex: 1; min-width: 0; }
.search input::placeholder { color: #444; }
.sport { width: 38px; height: 18px; }
.sys { width: 28px; }
.task { width: 62px; margin-left: 4px; padding-left: 2px; gap: 3px; justify-content: flex-start; border-bottom: 1px solid #2c88c5; font-size: 7px; }
.sys + .task { margin-left: 5px; }
.task.on { width: 65px; background: #f4f4f4; }
.ps { font: bold 7px "Open Sans", sans-serif; fill: #8fcaff; }
.pc { width: 25px; }
.tray { flex: 1; display: flex; align-items: center; justify-content: flex-end; gap: 5px; padding-right: 10px; }
.weather { gap: 4px; margin-right: 4px; }
.stack { display: flex; flex-direction: column; text-align: center; font-size: 7px; line-height: 10px; }
.clock { width: 38px; }
.note { position: relative; width: 18px; }
.note span { position: absolute; right: 0; bottom: -4px; width: 8px; height: 8px; border: 1px solid #555; border-radius: 50%; background: #dcdddf; font-size: 6px; line-height: 6px; }
```
